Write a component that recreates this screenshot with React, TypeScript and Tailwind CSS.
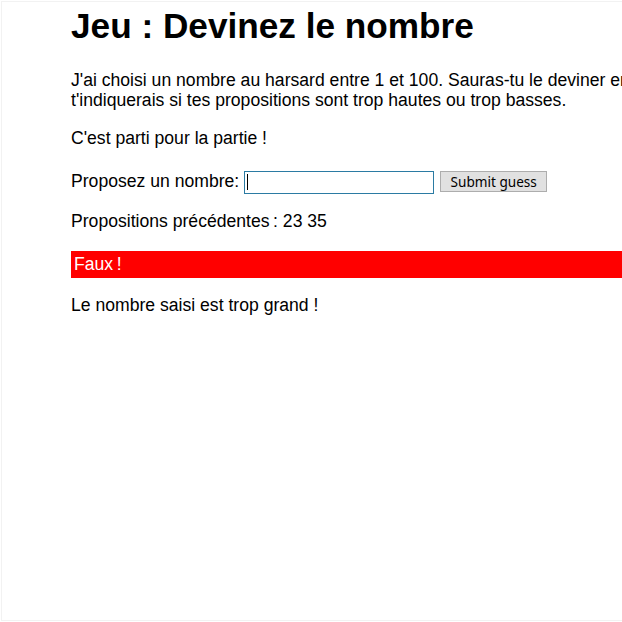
import React from 'react';

const guesses = [23, 35];

const App: React.FC = () => {
  return (
    <div className="h-[622px] w-[622px] overflow-hidden bg-white">
      <div className="h-[620px] mt-[1px] ml-[1px] border-l border-t border-b border-[#f2f2f2] overflow-hidden">
        <div
          className="w-[900px] pl-[69px] text-[17.6px] leading-[20.2px] text-black"
          style={{ fontFamily: '"Liberation Sans", Arial, sans-serif' }}
        >
          <h1 className="mt-[4px] mb-[23.6px] text-[35.2px] leading-[40.4px] font-bold">Jeu : Devinez le nombre</h1>

          <p className="whitespace-nowrap">
            J'ai choisi un nombre au harsard entre 1 et 100. Sauras-tu le deviner en
            <br />
            t'indiquerais si tes propositions sont trop hautes ou trop basses.
          </p>

          <p className="mt-[17.6px]">C'est parti pour la partie !</p>

          <div className="mt-[17.6px] flex items-start h-[28px]">
            <label className="mt-[5.4px]">Proposez un nombre:</label>
            <div className="mt-[5px] ml-[5px] h-[23px] w-[190px] border border-[#2b7ba3] bg-white flex items-center pl-[2px]">
              <span className="block h-[16px] w-[1px] bg-black" />
            </div>
            <button
              className="mt-[5.2px] ml-[6px] h-[21px] w-[107px] border border-[#adadad] bg-[#e1e1e1] text-[13.6px] leading-[19px] text-black"
              style={{ fontFamily: '"Noto Sans", Tahoma, sans-serif' }}
            >
              Submit guess
            </button>
          </div>

          <p className="mt-[17.6px]">Propositions précédentes&#8239;: {guesses.join(' ')}</p>

          <p className="mt-[19.6px] bg-[#ff0000] text-white py-[3.2px] pl-[3px]">Faux&#8239;!</p>

          <p className="mt-[17.6px]">Le nombre saisi est trop grand !</p>
        </div>
      </div>
    </div>
  );
};

export default App;
